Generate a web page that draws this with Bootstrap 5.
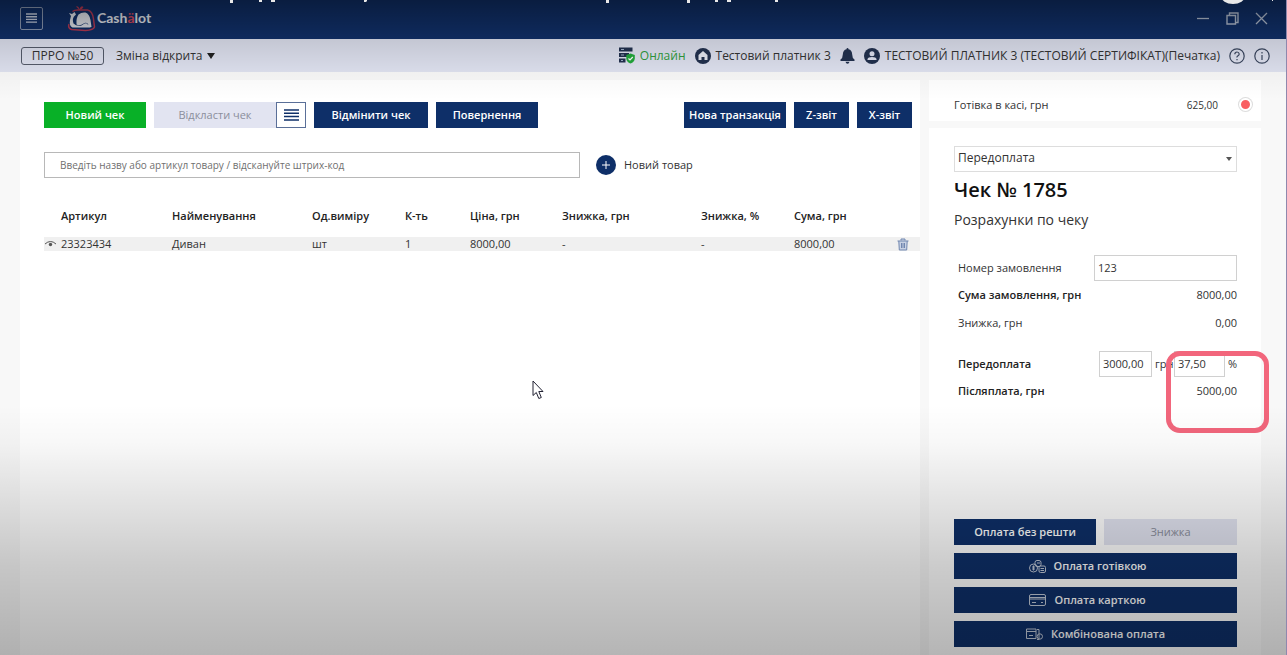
<!DOCTYPE html>
<html lang="uk">
<head>
<meta charset="utf-8">
<meta name="viewport" content="width=device-width, initial-scale=1">
<title>Cashalot</title>
<link href="https://cdn.jsdelivr.net/npm/bootstrap@5.3.0/dist/css/bootstrap.min.css" rel="stylesheet">
<style>
  :root { --navy: #0e2f68; --ink: #333; --pale: #e2e4f1; }
  body { font-family: "Open Sans", "Noto Sans", sans-serif; font-size: 11px; line-height: 16px; color: var(--ink); background: #f8f8f8; }
  .app { border-right: 1px solid #8f88ad; }
  .topbar { height: 39px; padding: 0 18px 3px 20px; background: #10306a; color: #c9d2e3; }
  .menu-btn { width: 23px; height: 23px; border: 1px solid #8d9bb5; border-radius: 2px; background: none; color: inherit; }
  .brand { font: 700 14px/20px Lato, sans-serif; color: #e8ebf2; text-decoration: none; }
  .brand svg { margin-right: 1px; }
  .brand span { color: #d8485f; }
  .win-btn { border: 0; background: none; padding: 0; color: #b4bfd2; line-height: 0; }
  .statusbar { height: 33px; padding: 0 16px 0 21px; background: #dfe2f0; font-size: 12px; line-height: 18px; }
  .status-items { gap: 9px; }
  .status-item { gap: 5px; }
  .prro { border: 1px solid #555b6b; border-radius: 3px; height: 18px; line-height: 16px; width: 83px; text-align: center; }
  .plain { border: 0; background: none; padding: 0; color: inherit; }
  .online { color: #2f9c3c; }
  .caret { border: 4px solid transparent; border-top: 6px solid #222; border-bottom: 0; }
  .workspace { padding: 8px 25px 0 20px; gap: 9px; }
  .panel { background: #fff; }
  .side { width: 332px; }
  .main-pane { padding: 22px 0 0 24px; }
  .act { height: 26px; border: 0; border-radius: 0; background: var(--navy); color: #fff; font-size: 11px; font-weight: 600; line-height: 16px; padding: 0; }
  .act:hover { background: #1a438a; color: #fff; }
  .act:disabled { background: var(--pale); color: #8b8e9c; opacity: 1; font-weight: 400; }
  .act.go { background: #08b027; }
  .w-lg { width: 102px; } .w-xl { width: 114px; } .w-pale { width: 122px; } .w-sm { width: 55px; }
  .list-btn { width: 30px; height: 26px; border: 1px solid #5a6f98; background: #fff; color: var(--navy); padding: 0; line-height: 0; }
  .field { border: 1px solid #d0d0d0; border-radius: 0; height: 26px; background: #fff; color: var(--ink); font-size: 11px; line-height: 16px; padding: 0 3px 2px; min-width: 0; }
  .search { width: 536px; padding: 0 15px; font-size: 10px; border-color: #b8b8b8; }
  .search::placeholder { color: #707070; opacity: 1; }
  .round-plus { width: 20px; height: 20px; border-radius: 50%; background: var(--navy); color: #fff; }
  .goods { table-layout: fixed; width: 100%; margin-top: 26px; }
  .goods th { font-weight: 600; padding: 4px 0 0; height: 33px; vertical-align: top; white-space: nowrap; color: #222; }
  .goods td { padding: 0; height: 14px; line-height: 14px; background: #f0f0f0; white-space: nowrap; }
  .c-eye { width: 17px; } .c-art { width: 111px; } .c-name { width: 140px; } .c-unit { width: 93px; } .c-qty { width: 65px; }
  .c-price { width: 92px; } .c-disc { width: 139px; } .c-pct { width: 93px; } .c-sum { width: 103px; } .c-del { width: 23px; }
  .cash { height: 41px; padding: 8px 9px 0 25px; }
  .cash-sum { font-size: 10px; margin-right: 21px; }
  .dot { width: 13px; height: 13px; border-radius: 50%; background: #f95f62; border: 2px solid #fff; box-shadow: 0 0 0 1px #ddd; }
  .receipt { margin-top: 7px; padding: 18px 24px 8px 25px; }
  .kind { appearance: none; width: 100%; border-color: #ddd; font-size: 12px; }
  .kind-wrap .caret { position: absolute; right: 5px; top: 11px; border-width: 4px 3px 0; border-top-color: #555; pointer-events: none; }
  .receipt h1 { font-size: 20px; line-height: 24px; font-weight: 600; color: #111; margin: 6px 0 0; }
  .receipt h2 { font-size: 14px; line-height: 20px; font-weight: 400; margin: 8px 0 25px; }
  .line { height: 28px; padding-left: 4px; }
  .line.tall { height: 26px; }
  .line b, .line label.fw { font-weight: 600; color: #222; }
  .prepay-line { margin-top: 14px; }
  .order-no { width: 143px; }
  .money { width: 53px; margin-right: 3px; } .share { width: 51px; margin-right: 3px; }
  .grn { width: 19px; }
  .mark-ring { position: absolute; width: 103px; height: 82px; right: -32px; top: 0; border: 5px solid #f2667c; border-radius: 14px; pointer-events: none; }
  .pay, .pay .split { gap: 8px; }
  .w-exact { width: 142px; }
  .pay svg { opacity: .75; }
  .pointer { position: absolute; left: 532px; top: 380px; pointer-events: none; }
  .shade { position: absolute; inset: 0; pointer-events: none;
    background: linear-gradient(to bottom, rgba(0,0,0,.4) 0, rgba(0,0,0,.12) 39px, rgba(0,0,0,.03) 72px, transparent 100px),
      linear-gradient(to top, rgba(0,0,0,.29) 0, rgba(0,0,0,.2) 90px, rgba(0,0,0,.1) 160px, rgba(0,0,0,.03) 210px, transparent 250px); }
  .caption-edge { position: absolute; left: 0; top: 0; pointer-events: none; }
</style>
</head>
<body>
<div class="app position-relative d-flex flex-column min-vh-100 overflow-hidden">
  <header class="topbar d-flex align-items-center">
    <button class="menu-btn d-flex align-items-center justify-content-center p-0 me-4" type="button" aria-label="Меню">
      <svg width="11" height="10" stroke="currentColor" stroke-width="1.4"><path d="M0 1h11M0 3.700h11M0 6.400h11M0 9.100h11"/></svg>
    </button>
    <a class="brand d-flex align-items-center" href="#">
      <svg width="29" height="27" viewBox="0 0 28 27">
        <path d="M5 6.500Q7 5 10 5L20 5Q25 6 26 14L27 22Q26 25 18 25.500L4 24.500Q0 23 1.500 19" fill="none" stroke="#b93a55" stroke-width="1.500"/>
        <path d="M8.500 1.500Q11 .5 12 4Q13.500 0 16 2Q15 4.500 12 5Z" fill="#c13b54"/>
        <path d="M1.500 8L4.500 9L7 7L8.500 9.500L6.500 11.500Q4.500 14 6 18.500Q9 21.500 14 20.500L17 18.500Q20 17.500 20.500 20H23V22.500H5Q1.500 21 2.500 15L3.500 11Z" fill="#e6e9ef"/>
        <path d="M11 9.500Q14 7 18 7.500Q22 9 23 15L24 22H21Q21 17 17 18Q12 21.500 9 19.500Q8.500 13 11 9.500Z" fill="#e6e9ef"/>
      </svg>Cash<span>ä</span>lot
    </a>
    <div class="ms-auto d-flex align-items-center gap-3">
      <button class="win-btn" type="button" aria-label="Згорнути"><svg width="13" height="13" stroke="currentColor" stroke-width="1.3"><path d="M0 6.500h12"/></svg></button>
      <button class="win-btn" type="button" aria-label="Вікно"><svg width="13" height="13" fill="none" stroke="currentColor" stroke-width="1.400"><path d="M1 3.500h8.500v8.500H1zM3.500 3V1H12v9.500H10"/></svg></button>
      <button class="win-btn" type="button" aria-label="Закрити"><svg width="13" height="13" stroke="currentColor" stroke-width="1.300"><path d="M1 1l11 11M12 1L1 12"/></svg></button>
    </div>
  </header>

  <div class="statusbar d-flex align-items-center text-nowrap">
    <div class="prro me-2">ПРРО №50</div>
    <button class="plain d-flex align-items-center ms-1" type="button">Зміна відкрита<span class="caret ms-1"></span></button>
    <div class="status-items ms-auto d-flex align-items-center">
      <span class="status-item online d-flex align-items-center"><svg width="17" height="17" viewBox="0 0 17 17"><path d="M1 .5h13.500v4H1zM1 6h10v4H1zM1 11.500h6.500v4H1z" fill="#22314f"/><path d="M3 2.500h3M3 8h3M3 13.500h2" stroke="#9fb0c9"/><path d="M12.500 6.500L16.800 8v3.500Q16.500 15 12.500 16.500Q8.500 15 8.300 11.500V8z" fill="#22a93c"/><path d="M10.500 11.500l1.500 1.500 2.800-3" stroke="#fff" fill="none" stroke-width="1.200"/></svg>Онлайн</span>
      <span class="status-item d-flex align-items-center"><svg width="16" height="16" viewBox="0 0 16 16"><circle cx="8" cy="8" r="8" fill="#22314f"/><path d="M8 3L3.500 7v5h3V9h3v3h3V7z" fill="#e6e9f2"/></svg>Тестовий платник 3</span>
      <svg width="15" height="16" viewBox="0 0 15 16"><path d="M7.500 0Q8.500 0 8.500 1.300Q12 2 12.200 6.500Q12.200 10 14.500 11.500V13H.5V11.500Q2.800 10 2.800 6.500Q3 2 6.500 1.300Q6.500 0 7.500 0zM5.500 13.800h4Q9 15.800 7.500 15.800T5.500 13.800z" fill="#22314f"/></svg>
      <span class="status-item d-flex align-items-center"><svg width="16" height="16" viewBox="0 0 16 16"><circle cx="8" cy="8" r="8" fill="#22314f"/><circle cx="8" cy="5.700" r="2.500" fill="#dfe2f0"/><path d="M3.500 12V11Q4 9 8 9T12.500 11V12z" fill="#dfe2f0"/></svg>ТЕСТОВИЙ ПЛАТНИК 3 (ТЕСТОВИЙ СЕРТИФІКАТ)(Печатка)</span>
      <button class="plain d-flex" type="button" aria-label="Довідка"><svg width="16" height="16" viewBox="0 0 16 16" fill="none" stroke="#3a465f" stroke-width="1.200"><circle cx="8" cy="8" r="7.200"/><path d="M5.800 6.200Q6 4 8 4T10.200 6Q10.200 7 9 7.800T8 9.500M8 11v1.300"/></svg></button>
      <button class="plain d-flex" type="button" aria-label="Про програму"><svg width="16" height="16" viewBox="0 0 16 16" fill="none" stroke="#3a465f" stroke-width="1.200"><circle cx="8" cy="8" r="7.200"/><path d="M8 7v5M8 4v1.500"/></svg></button>
    </div>
  </div>

  <div class="d-flex flex-grow-1 workspace">
    <main class="panel main-pane flex-grow-1">
      <div class="d-flex align-items-center pe-2 gap-2">
        <button class="btn act go w-lg" type="button">Новий чек</button>
        <div class="d-flex">
          <button class="btn act w-pale" type="button" disabled>Відкласти чек</button>
          <button class="list-btn" type="button" aria-label="Відкладені чеки"><svg width="15" height="12" stroke="currentColor" stroke-width="1.500"><path d="M0 1h15M0 4.300h15M0 7.600h15M0 10.900h15"/></svg></button>
        </div>
        <button class="btn act w-xl" type="button">Відмінити чек</button>
        <button class="btn act w-lg" type="button">Повернення</button>
        <button class="btn act w-lg ms-auto" type="button">Нова транзакція</button>
        <button class="btn act w-sm" type="button">Z-звіт</button>
        <button class="btn act w-sm" type="button">X-звіт</button>
      </div>
      <div class="d-flex align-items-center mt-4">
        <input class="field search me-3" type="text" aria-label="Пошук товару" placeholder="Введіть назву або артикул товару / відскануйте штрих-код">
        <button class="plain d-flex align-items-center gap-2" type="button">
          <span class="round-plus d-flex align-items-center justify-content-center"><svg width="8" height="8" stroke="#fff"><path d="M4 0v8M0 4h8"/></svg></span>Новий товар
        </button>
      </div>
      <table class="goods">
        <colgroup><col class="c-eye"><col class="c-art"><col class="c-name"><col class="c-unit"><col class="c-qty"><col class="c-price"><col class="c-disc"><col class="c-pct"><col class="c-sum"><col class="c-del"></colgroup>
        <thead><tr><th></th><th>Артикул</th><th>Найменування</th><th>Од.виміру</th><th>К-ть</th><th>Ціна, грн</th><th>Знижка, грн</th><th>Знижка, %</th><th>Сума, грн</th><th></th></tr></thead>
        <tbody><tr>
          <td><svg class="d-block" width="13" height="8" viewBox="0 0 13 8" fill="none" stroke="#555"><path d="M1 4Q6.500-1 12 4"/><circle cx="6.500" cy="4.500" r="1.700" fill="#555" stroke="none"/></svg></td>
          <td>23323434</td><td>Диван</td><td>шт</td><td>1</td><td>8000,00</td><td>-</td><td>-</td><td>8000,00</td>
          <td><button class="plain d-block" type="button" aria-label="Видалити"><svg class="d-block" width="12" height="13" viewBox="0 0 12 13" fill="#c9d2e4" stroke="#7187b0"><path d="M1.800 3l.5 9h7.400l.5-9M.5 3h11M4 2.500V1h4v1.500M4.500 5v5M6 5v5M7.500 5v5"/></svg></button></td>
        </tr></tbody>
      </table>
    </main>

    <aside class="side d-flex flex-column flex-shrink-0">
      <div class="panel cash d-flex align-items-center">
        <span class="me-auto">Готівка в касі, грн</span><span class="cash-sum">625,00</span><span class="dot"></span>
      </div>
      <div class="panel receipt d-flex flex-column flex-grow-1">
        <div class="kind-wrap position-relative">
          <select class="field kind d-block" aria-label="Вид розрахунку"><option>Передоплата</option></select><span class="caret"></span>
        </div>
        <h1>Чек № 1785</h1>
        <h2>Розрахунки по чеку</h2>
        <div class="line tall d-flex align-items-center justify-content-between"><label for="order">Номер замовлення</label><input id="order" class="field order-no" type="text" value="123"></div>
        <div class="line d-flex align-items-center justify-content-between"><b>Сума замовлення, грн</b><span>8000,00</span></div>
        <div class="line d-flex align-items-center justify-content-between"><span>Знижка, грн</span><span>0,00</span></div>
        <div class="line tall prepay-line d-flex align-items-center position-relative">
          <label class="fw me-auto" for="prepay">Передоплата</label>
          <input id="prepay" class="field money" type="text" value="3000,00"><span class="grn">грн</span>
          <input class="field share" type="text" value="37,50" aria-label="Передоплата, %"><span>%</span>
          <span class="mark-ring"></span>
        </div>
        <div class="line d-flex align-items-center justify-content-between"><b>Післяплата, грн</b><span>5000,00</span></div>
        <div class="pay d-flex flex-column mt-auto">
          <div class="split d-flex"><button class="btn act w-exact" type="button">Оплата без решти</button><button class="btn act flex-grow-1" type="button" disabled>Знижка</button></div>
          <button class="btn act d-flex align-items-center justify-content-center gap-2 pe-3" type="button"><svg width="17" height="13" viewBox="0 0 17 13" fill="none" stroke="#fff"><rect x="6" y=".5" width="6" height="6" rx="2"/><circle cx="4.500" cy="8" r="4"/><path d="M4.500 5.500v5M3 7h3M3 9h3M8 3h3"/><rect x="10" y="6" width="6.500" height="6.500" rx="1.500"/><path d="M11.500 8.500h3.500M11.500 10.500h3.500"/></svg>Оплата готівкою</button>
          <button class="btn act d-flex align-items-center justify-content-center gap-2 pe-3" type="button"><svg width="17" height="12" viewBox="0 0 17 12" fill="none" stroke="#fff"><rect x=".5" y=".5" width="16" height="11" rx="1.500"/><path d="M1 3.500h15M1 5h15M3 8.500h4M12 8.500h2"/></svg>Оплата карткою</button>
          <button class="btn act d-flex align-items-center justify-content-center gap-2" type="button"><svg width="17" height="12" viewBox="0 0 17 12" fill="none" stroke="#fff"><path d="M10 10.500H.5V1H10zM1 3.500h9M3 7.500h4M11 1.500h2v10h-2"/><circle cx="13.800" cy="8.500" r="2.700"/></svg>Комбінована оплата</button>
        </div>
      </div>
    </aside>
  </div>

  <svg class="pointer" width="14" height="20" viewBox="0 0 14 20" fill="#fff" stroke="#223"><path d="M1 1v14.500l3.300-3 2.500 6 2.500-1-2.500-6H11z"/></svg>
  <div class="shade"></div>
  <svg class="caption-edge" width="1287" height="5" fill="#e8e8e8"><path d="M230 0h3v3h-3zM259 0h3v2h-3zM271 0h4v2h-4zM364 0h3v1l-1 1h-2zM606 0h3v3h-3zM687 0h3v3h-3zM715 0h3v2h-3zM727 0h4v2h-4zM775 0h3v2h-3zM1272 0h1v1h-1z"/><ellipse cx="1233" cy="-4" rx="12" ry="8"/></svg>
</div>
<script src="https://cdn.jsdelivr.net/npm/bootstrap@5.3.0/dist/js/bootstrap.bundle.min.js"></script>
</body>
</html>
